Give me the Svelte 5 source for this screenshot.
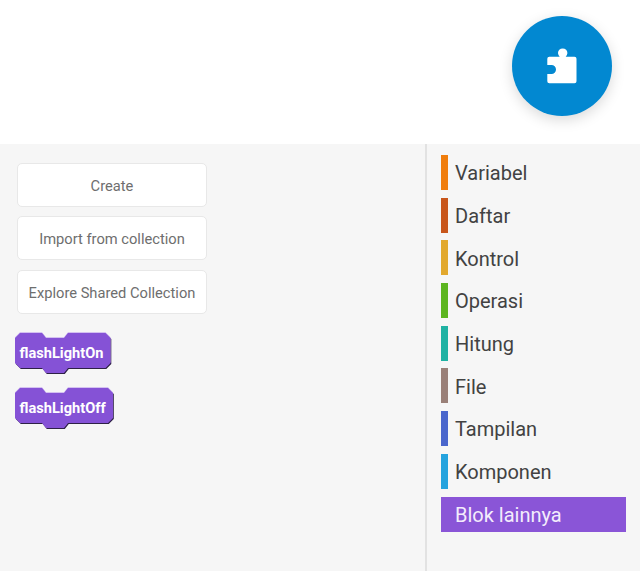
<script>
  const buttons = ['Create', 'Import from collection', 'Explore Shared Collection'];
  const categories = [
    { name: 'Variabel', color: '#f07d0c' },
    { name: 'Daftar', color: '#c8561b' },
    { name: 'Kontrol', color: '#e2a82d' },
    { name: 'Operasi', color: '#5cb51f' },
    { name: 'Hitung', color: '#1fb2a3' },
    { name: 'File', color: '#9a8078' },
    { name: 'Tampilan', color: '#4a66cc' },
    { name: 'Komponen', color: '#25a3de' },
    { name: 'Blok lainnya', color: '#8a55d7', active: true },
  ];
  const blocks = [
    { name: 'flashLightOn', width: 95.5 },
    { name: 'flashLightOff', width: 98 },
  ];

  function blockPath(w) {
    return `M0 5 L5 0 H27 L31 5 H49 L53 0 H${w - 5} L${w} 5 V30 L${w - 5} 35 H53 L49 40 H31 L27 35 H5 L0 30 Z`;
  }
</script>

<div class="page">
  <header class="top">
    <button class="fab" aria-label="Extensions">
      <svg width="30" height="36" viewBox="0 0 30 36">
        <path fill="#fff" d="M2 8.7 H12.7 a4.7 4.7 0 1 1 6 0 H27.5 a2 2 0 0 1 2 2 V33.3 a2 2 0 0 1 -2 2 H2.3 a2 2 0 0 1 -2 -2 V26 H4.5 a4.5 4.5 0 0 0 0 -9 H0.3 V10.7 a2 2 0 0 1 2 -2 Z" />
      </svg>
    </button>
  </header>

  <main class="workspace">
    <section class="flyout">
      {#each buttons as label}
        <button class="action">{label}</button>
      {/each}
      <div class="blocks">
        {#each blocks as b}
          <svg class="block" width={b.width + 2} height="42" viewBox="-1 -1 {b.width + 2} 42">
            <path d={blockPath(b.width)} transform="translate(0.8 1)" fill="#2e2147" />
            <path d={blockPath(b.width)} transform="translate(0 -0.7)" fill="#c9b0f0" />
            <path d={blockPath(b.width)} fill="#8552d6" />
            <text x="4.5" y="24.5">{b.name}</text>
          </svg>
        {/each}
      </div>
    </section>

    <nav class="toolbox">
      {#each categories as c}
        <div class="category" class:active={c.active}>
          <span class="swatch" style:background={c.color}></span>
          <span class="label">{c.name}</span>
        </div>
      {/each}
    </nav>
  </main>
</div>

<style>
  :global(body) {
    margin: 0;
    background: #fff;
    font-family: Roboto, "Liberation Sans", sans-serif;
  }
  .page {
    width: 640px;
    height: 571px;
    display: flex;
    flex-direction: column;
    overflow: hidden;
  }
  .top {
    height: 144px;
    flex: none;
    display: flex;
    justify-content: flex-end;
    padding: 16px 28px 0 0;
    box-sizing: border-box;
    background: #fff;
  }
  .fab {
    width: 100px;
    height: 100px;
    border: 0;
    padding: 0;
    border-radius: 50%;
    background: #0288d1;
    box-shadow: 0 4px 14px rgba(0, 0, 0, 0.15);
    display: flex;
    align-items: center;
    justify-content: center;
  }
  .fab svg {
    display: block;
  }
  .workspace {
    flex: 1;
    display: flex;
    background: #f6f6f6;
  }
  .flyout {
    width: 425px;
    flex: none;
    box-sizing: border-box;
    padding: 19px 0 0 17px;
    display: flex;
    flex-direction: column;
    align-items: flex-start;
    gap: 9.4px;
  }
  .action {
    width: 190px;
    height: 44px;
    box-sizing: border-box;
    padding: 2px 0 0;
    background: #fff;
    border: 1px solid #e8e8e8;
    border-radius: 5px;
    font-family: inherit;
    font-size: 14.7px;
    color: #6e6e6e;
  }
  .blocks {
    margin: 8.6px 0 0 -3px;
    display: flex;
    flex-direction: column;
    gap: 13px;
  }
  .block {
    display: block;
  }
  .block text {
    font-family: Roboto, "Liberation Sans", sans-serif;
    font-size: 14.6px;
    font-weight: 700;
    fill: #fff;
  }
  .toolbox {
    flex: 1;
    border-left: 2px solid #e2e2e2;
    padding: 10.85px 14px 0 14px;
    display: flex;
    flex-direction: column;
    gap: 7.72px;
  }
  .category {
    height: 35px;
    display: flex;
    align-items: center;
    gap: 7px;
    font-size: 20px;
    color: #424242;
  }
  .swatch {
    width: 7px;
    height: 35px;
    flex: none;
  }
  .label {
    padding-top: 1.6px;
  }
  .category.active {
    background: #8a55d7;
    color: #f3ecfc;
  }
</style>
